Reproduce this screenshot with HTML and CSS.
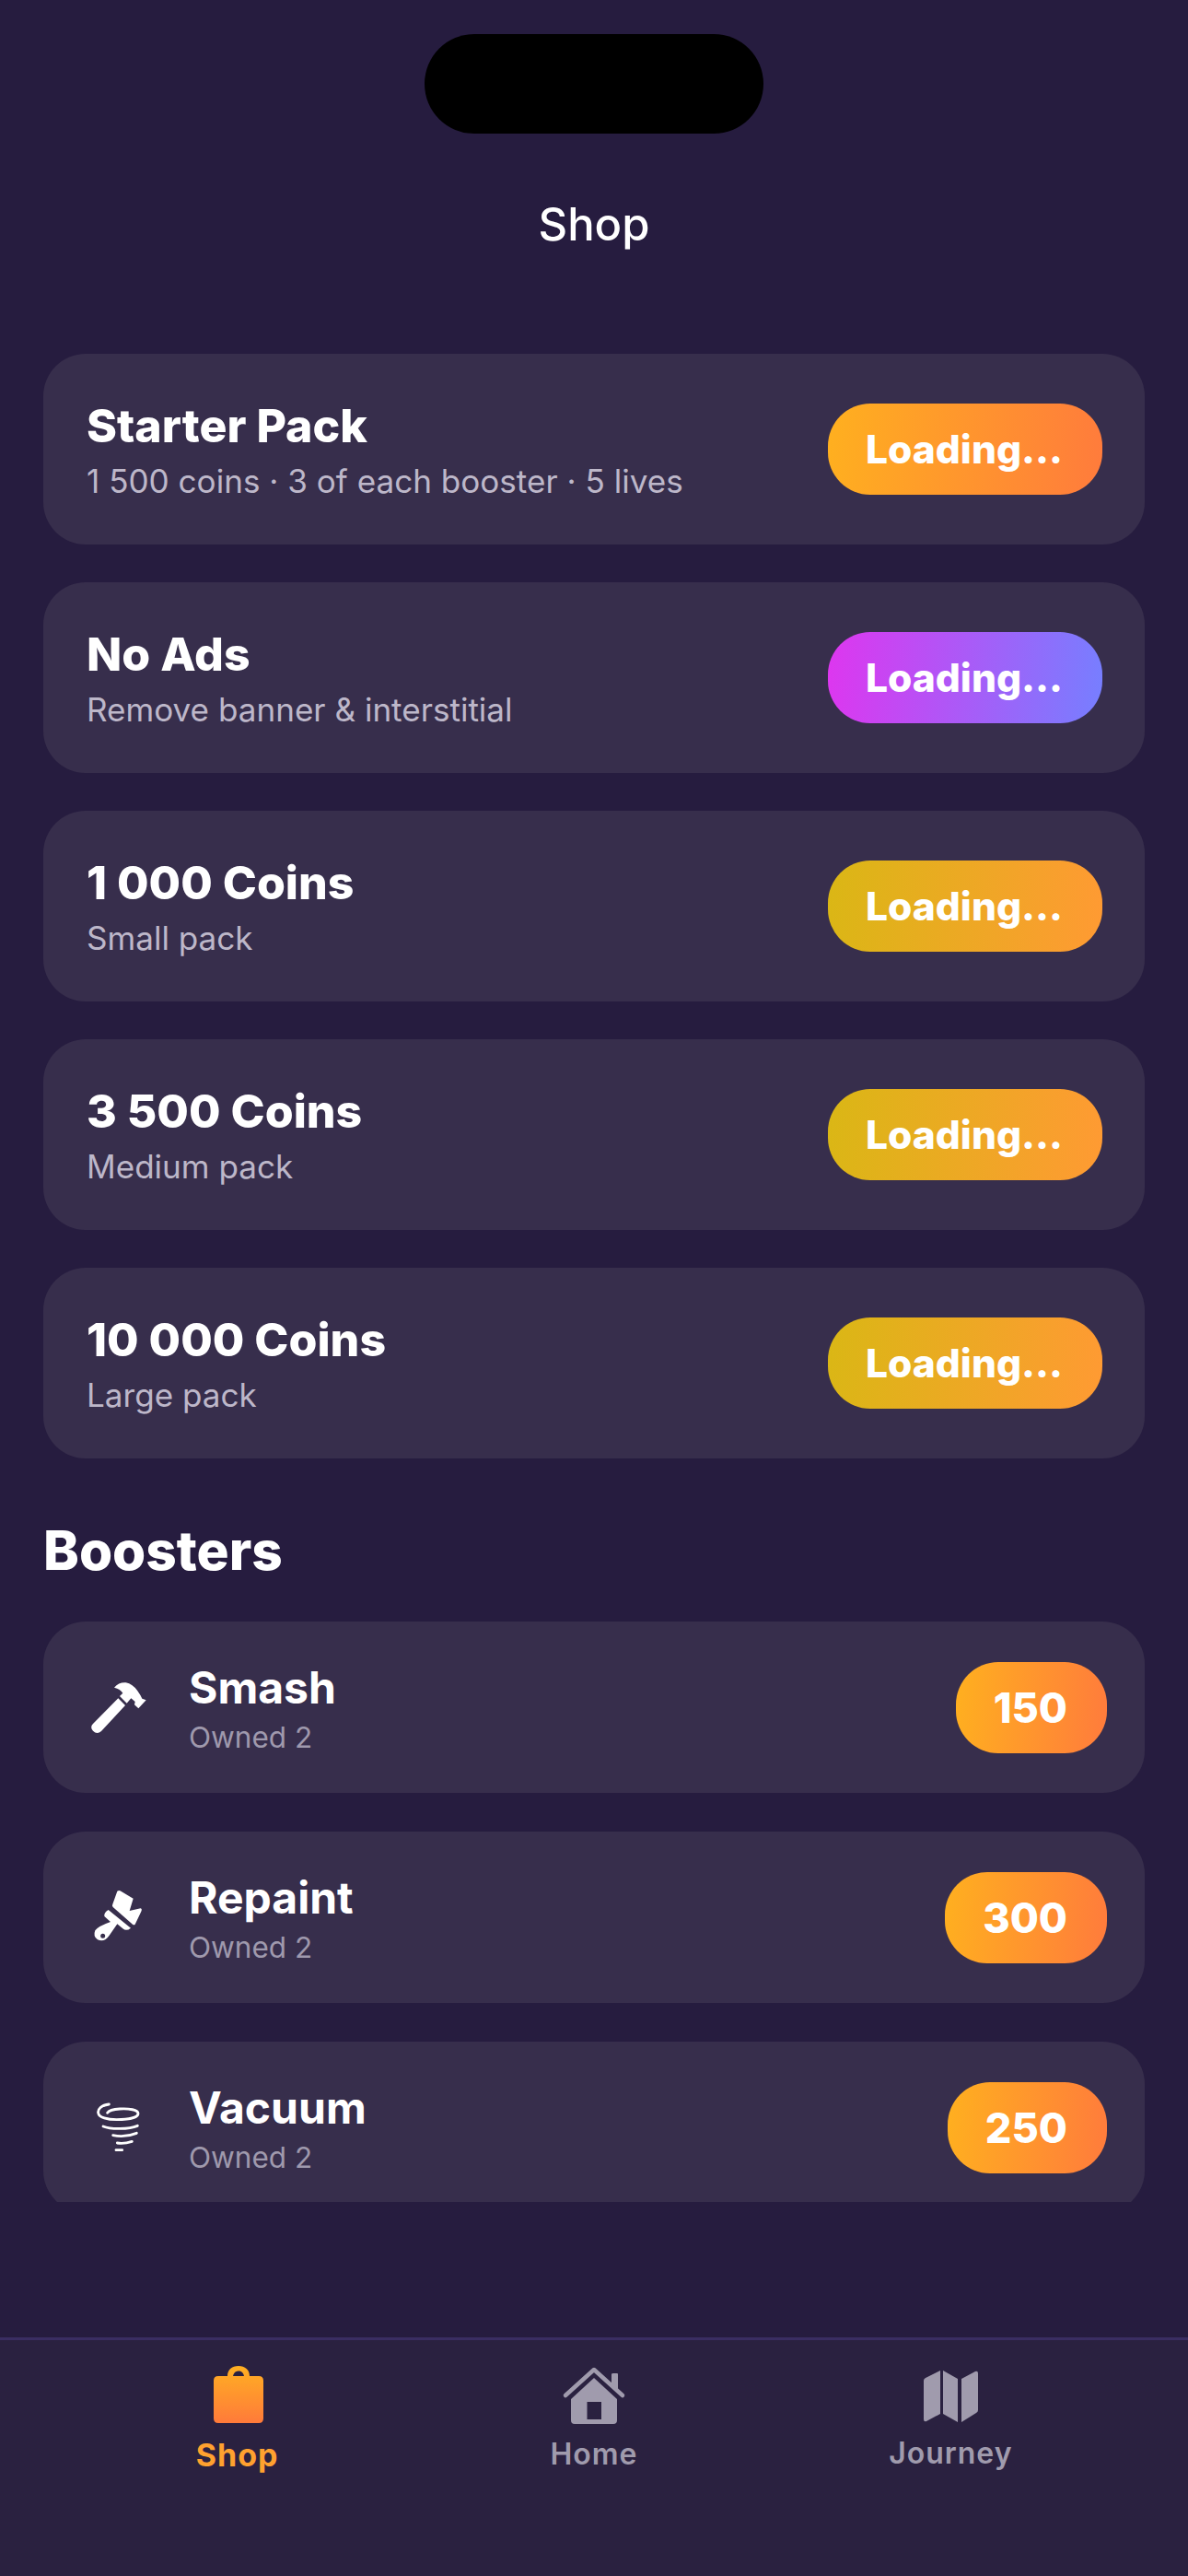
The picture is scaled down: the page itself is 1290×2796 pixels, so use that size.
FILE: index.html
```html
<!DOCTYPE html>
<html lang="en">
<head>
<meta charset="utf-8">
<title>Shop</title>
<link rel="stylesheet" href="styles.css">
</head>
<body>
<div class="screen">
  <header class="top">
    <div class="island"></div>
    <h1 class="page-title">Shop</h1>
  </header>
  <main class="scroll">
    <section class="packs">
      <div class="card pack">
        <div class="info"><div class="name">Starter Pack</div><div class="desc">1 500 coins · 3 of each booster · 5 lives</div></div>
        <div class="btn btn-orange">Loading...</div>
      </div>
      <div class="card pack">
        <div class="info"><div class="name">No Ads</div><div class="desc">Remove banner &amp; interstitial</div></div>
        <div class="btn btn-pink">Loading...</div>
      </div>
      <div class="card pack">
        <div class="info"><div class="name">1 000 Coins</div><div class="desc">Small pack</div></div>
        <div class="btn btn-gold">Loading...</div>
      </div>
      <div class="card pack">
        <div class="info"><div class="name">3 500 Coins</div><div class="desc">Medium pack</div></div>
        <div class="btn btn-gold">Loading...</div>
      </div>
      <div class="card pack">
        <div class="info"><div class="name">10 000 Coins</div><div class="desc">Large pack</div></div>
        <div class="btn btn-gold">Loading...</div>
      </div>
    </section>
    <h2 class="section-title">Boosters</h2>
    <section class="boosters">
      <div class="card booster">
        <svg class="b-icon" viewBox="267 759 240 240"><path fill="#fff" d="M372 815 Q388 797 410 799 Q432 803 448 826 Q458 840 463 851 L476 856 L451 883 L438 871 L440 861 L427 850 L413 866 L390 843 L400 833 Q392 820 372 815Z M385 850 L408 873 L330 957 Q316 970 303 956 Q292 944 303 933Z"/></svg>
        <div class="info"><div class="b-name">Smash</div><div class="b-owned">Owned 2</div></div>
        <div class="btn btn-orange price">150</div>
      </div>
      <div class="card booster">
        <svg class="b-icon" viewBox="-3 3 240 240"><path fill="#fff" fill-rule="evenodd" d="M112 38 Q118 34 124 38 L164 62 L152 102 L188 94 Q194 96 190 104 L170 146 Q167 150 162 146 L98 90 Q94 85 97 80 Z M83 99 L156 158 Q142 170 130 160 L112 145 L86 182 Q70 206 48 196 Q32 186 40 166 Q50 152 90 138 L70 120 Q68 108 83 99Z M65 176 A7.500 7.500 0 1 0 65 191 A7.500 7.500 0 1 0 65 176Z"/></svg>
        <div class="info"><div class="b-name">Repaint</div><div class="b-owned">Owned 2</div></div>
        <div class="btn btn-orange price">300</div>
      </div>
      <div class="card booster">
        <svg class="b-icon" viewBox="-3 -3 240 240"><g fill="none" stroke="#fff" stroke-width="8.500" stroke-linecap="round"><path d="M85 42 C60 45 48 58 50 70 C52 85 80 92 110 92 C150 92 180 85 180 72 C180 60 150 55 120 57 C100 58 85 62 80 70"/><path d="M66 114 C90 124 150 124 178 112"/><path d="M98 143 C120 148 150 146 175 136"/><path d="M112 168 C125 170 145 168 160 163"/><path d="M108 191 L128 191"/></g></svg>
        <div class="info"><div class="b-name">Vacuum</div><div class="b-owned">Owned 2</div></div>
        <div class="btn btn-orange price">250</div>
      </div>
    </section>
  </main>
  <nav class="tabs">
    <div class="tab tab-active">
      <svg class="t-icon" viewBox="-6 0 72 66"><defs><linearGradient id="bag" x1="0" y1="0" x2="0" y2="1"><stop offset="0" stop-color="#ffb022"/><stop offset="1" stop-color="#ff7a3a"/></linearGradient></defs><path fill="url(#bag)" fill-rule="evenodd" d="M19 11 C19 4 24 0 31 0 C38 0 43 4 43 11 L53 11 Q58 11 58 16 L58 57 Q58 62 53 62 L9 62 Q4 62 4 57 L4 16 Q4 11 9 11 Z M25 11 L37 11 C36 7 34 5.500 31 5.500 C28 5.500 26 7 25 11 Z"/></svg>
      <span>Shop</span>
    </div>
    <div class="tab">
      <svg class="t-icon" viewBox="0 0 72 66"><path fill="#a09bad" fill-rule="evenodd" d="M11 36 L36 13 L61 36 L61 59 Q61 63 57 63 L15 63 Q11 63 11 59 Z M28.500 39 L28.500 58 L44 58 L44 39 Z"/><path fill="none" stroke="#a09bad" stroke-width="4.500" stroke-linecap="round" stroke-linejoin="round" d="M5 32 L36 4 L67 32"/><path fill="#a09bad" d="M55 9 Q55 8 57 8 L61 8 Q62 8 62 9 L62 26 L55 19 Z"/></svg>
      <span>Home</span>
    </div>
    <div class="tab tab-map">
      <svg class="t-icon" viewBox="0 0 72 66"><path fill="#a09bad" d="M7 16 Q7 14 9 13 L25 5 L25 52 L10 60 Q7 61 7 58 Z M28 5 L44 14 L44 61 L28 52 Z M48 14 L63 6 Q66 5 66 8 L66 48 Q66 50 64 51 L48 61 Z"/></svg>
      <span>Journey</span>
    </div>
  </nav>
</div>
</body>
</html>
```
FILE: styles.css
```css
* { box-sizing: border-box; }
html, body { margin: 0; padding: 0; }
body { background: #261c3f; font-family: Inter, "Noto Sans", sans-serif; color: #fff; }
.screen { width: 1290px; height: 2796px; display: flex; flex-direction: column; overflow: hidden; }
.top { height: 384px; display: flex; flex-direction: column; align-items: center; padding-top: 37px; flex: none; }
.island { width: 368px; height: 108px; border-radius: 54px; background: #000; }
.page-title { margin: 70px 0 0; font-size: 49px; line-height: 58px; font-weight: 500; }
.scroll { height: 2006px; flex: none; overflow: hidden; padding: 0 47px; }
.card { background: #372e4c; border-radius: 46px; display: flex; align-items: center; }
.packs { display: flex; flex-direction: column; gap: 41px; }
.pack { height: 207px; padding: 0 46px 0 47px; justify-content: space-between; }
.pack .info { padding-top: 2px; }
.name { font-size: 50px; line-height: 56px; font-weight: 800; }
.desc { font-size: 35.1px; line-height: 44px; margin-top: 10px; color: #bdb7c9; }
.btn { height: 99px; border-radius: 46px; display: flex; align-items: center; justify-content: center; font-weight: 800; font-size: 42.5px; width: 298px; padding-right: 2px; flex: none; }
.btn-orange { background: linear-gradient(95deg, #ffb01f, #ff7b3c); }
.btn-pink { background: linear-gradient(95deg, #de36ef, #767fff); }
.btn-gold { background: linear-gradient(95deg, #dab715, #ff9a33); }
.section-title { margin: 66px 0 0; font-size: 58.500px; line-height: 68px; font-weight: 800; height: 111px; }
.boosters { display: flex; flex-direction: column; gap: 42px; }
.booster { height: 186px; padding: 0 41px 0 42px; flex: none; }
.b-icon { width: 80px; height: 80px; flex: none; margin-right: 36px; }
.booster .info { flex: 1; padding-top: 4px; }
.b-name { font-size: 48px; line-height: 56px; font-weight: 700; }
.b-owned { font-size: 31.500px; line-height: 40px; color: #9f99ad; margin-top: 6px; }
.price { width: auto; padding: 0 43px 0 41px; font-size: 45px; }
.tabs { margin-top: 147px; flex: 1; background: #2a2140; border-top: 3px solid #3a2d62; display: grid; grid-template-columns: 1fr 1fr 1fr; padding: 28px 64px 0; align-items: start; }
.tab { display: flex; flex-direction: column; align-items: center; gap: 10px; color: #a09bad; font-size: 32px; line-height: 40px; font-weight: 600; letter-spacing: 1px; }
.tab-active { color: #ffa12f; gap: 11px; font-size: 34px; font-weight: 700; }
.tab-map { gap: 9px; }
.t-icon { width: 72px; height: 66px; }
```
